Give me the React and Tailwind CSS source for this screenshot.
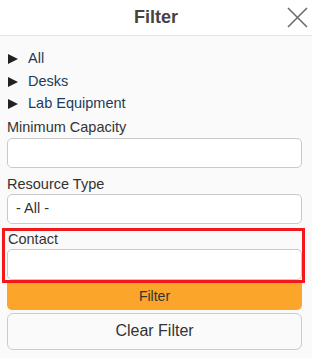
import { useState } from 'react';

const categories = ['All', 'Desks', 'Lab Equipment'];

const Caret = () => (
  <svg width="10" height="10" viewBox="0 0 10 10" className="shrink-0">
    <polygon points="0,0 10,5 0,10" fill="#222" />
  </svg>
);

const App = () => {
  const [capacity, setCapacity] = useState('');
  const [type, setType] = useState('all');
  const [contact, setContact] = useState('');

  return (
    <div className="h-[358px] w-[312px] overflow-hidden bg-[#fafafa] font-['Liberation_Sans',Arial,sans-serif] text-[#333]">
      {/* Header */}
      <div className="grid h-[36px] grid-cols-[1fr_auto_1fr] items-center border-b border-[#e2e2e2] bg-white">
        <div />
        <h1 className="text-[18px] font-bold text-[#444]">Filter</h1>
        <div className="flex justify-end pr-[4px]">
          <svg width="21" height="21" viewBox="0 0 21 21">
            <path d="M1 1 L20 20 M20 1 L1 20" stroke="#6b6b6b" strokeWidth="1.6" fill="none" />
          </svg>
        </div>
      </div>

      <div className="pl-[7px] pr-[10px]">
        {/* Category tree */}
        <ul className="pt-[12px]">
          {categories.map((c) => (
            <li key={c} className="flex h-[22.5px] items-center gap-[10px] pl-[1px] text-[14.5px] text-[#1d3b5a]">
              <Caret />
              <span>{c}</span>
            </li>
          ))}
        </ul>

        {/* Minimum capacity */}
        <label className="mt-[1px] block text-[14.5px] leading-[20px]">Minimum Capacity</label>
        <input
          value={capacity}
          onChange={(e) => setCapacity(e.target.value)}
          className="mt-[1px] block h-[30px] w-full rounded-[5px] border border-[#c9c9c9] bg-white px-2 text-[14px]"
        />

        {/* Resource type */}
        <label className="mt-[6px] block text-[14.5px] leading-[20px]">Resource Type</label>
        <select
          value={type}
          onChange={(e) => setType(e.target.value)}
          className="block h-[30px] w-full appearance-none rounded-[5px] border border-[#c9c9c9] bg-white px-[8px] text-[14.5px] text-[#333]"
        >
          <option value="all">- All -</option>
          <option value="desk">Desks</option>
          <option value="lab">Lab Equipment</option>
        </select>

        {/* Contact (highlighted) */}
        <div className="-ml-[5px] -mr-[3px] mt-[4px] border-[3px] border-[#f2181b] pl-[2px]">
          <label className="block pl-[1px] text-[14.5px] leading-[17px]">Contact</label>
          <input
            value={contact}
            onChange={(e) => setContact(e.target.value)}
            className="mt-[1px] block h-[31px] w-full rounded-[5px] border border-[#c9c9c9] bg-white px-2 text-[14px]"
          />
        </div>

        {/* Actions */}
        <button className="block h-[27px] w-full rounded-b-[5px] bg-[#fba52b] text-[14px] text-[#333]">
          Filter
        </button>
        <button className="mt-[3px] block h-[37px] w-full rounded-[6px] border border-[#cbcbcb] bg-[#fafafa] text-[16px] text-[#333]">
          Clear Filter
        </button>
      </div>
    </div>
  );
};

export default App;
